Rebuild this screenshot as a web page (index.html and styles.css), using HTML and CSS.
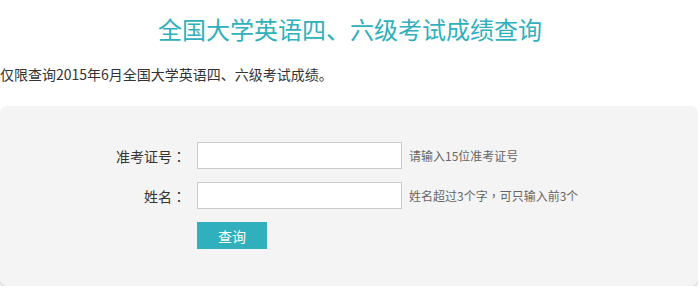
FILE: index.html
```html
<!DOCTYPE html>
<html lang="zh-CN">
<head>
    <meta charset="UTF-8">
    <title>全国大学英语四、六级考试成绩查询</title>
    <link rel="stylesheet" href="styles.css">
</head>
<body>
    <h1 class="title">全国大学英语四、六级考试成绩查询</h1>
    <p class="notice">仅限查询2015年6月全国大学英语四、六级考试成绩。</p>

    <div class="panel">
        <form class="query-form">
            <div class="row">
                <label class="label" for="zkzh">准考证号<span class="punct" lang="zh-Hant">：</span></label>
                <input type="text" id="zkzh" class="field">
                <span class="hint">请输入15位准考证号</span>
            </div>
            <div class="row">
                <label class="label" for="xm">姓名<span class="punct" lang="zh-Hant">：</span></label>
                <input type="text" id="xm" class="field">
                <span class="hint">姓名超过3个字<span class="punct" lang="zh-Hant">，</span>可只输入前3个</span>
            </div>
            <div class="row">
                <span class="label"></span>
                <button type="button" class="submit">查询</button>
            </div>
        </form>
    </div>
</body>
</html>
```

FILE: styles.css
```css
body {
    margin: 0;
    font-family: "Noto Sans CJK SC", sans-serif;
    color: #333;
    background: #fff;
}
.title {
    margin: 0;
    padding-top: 12px;
    height: 34px;
    line-height: 34px;
    text-align: center;
    font-size: 24px;
    font-weight: normal;
    color: #2fb0bc;
}
.notice {
    margin: 18px 0 0 0;
    font-size: 14px;
    line-height: 20px;
}
.panel {
    margin: 22px 2px 0 0;
    height: 180px;
    background: #f4f4f4;
    border-radius: 7px;
    box-shadow: 0 3px 0 #dedede;
    box-sizing: border-box;
    padding-top: 36px;
}
.row {
    display: flex;
    align-items: center;
    height: 27px;
    margin-bottom: 13px;
}
.label {
    width: 186px;
    margin-right: 11px;
    text-align: right;
    font-size: 14px;
    color: #333;
}
.punct {
    font-family: "Noto Sans CJK TC", sans-serif;
}
.field {
    width: 205px;
    height: 27px;
    box-sizing: border-box;
    border: 1px solid #ccc;
    background: #fff;
    margin: 0;
    padding: 0 4px;
}
.hint {
    margin-left: 7px;
    font-size: 12px;
    color: #666;
}
.submit {
    width: 70px;
    height: 27px;
    border: 0;
    margin: 0;
    background: #2fb0bc;
    color: #fff;
    font-family: inherit;
    font-size: 14px;
    cursor: pointer;
}
```
